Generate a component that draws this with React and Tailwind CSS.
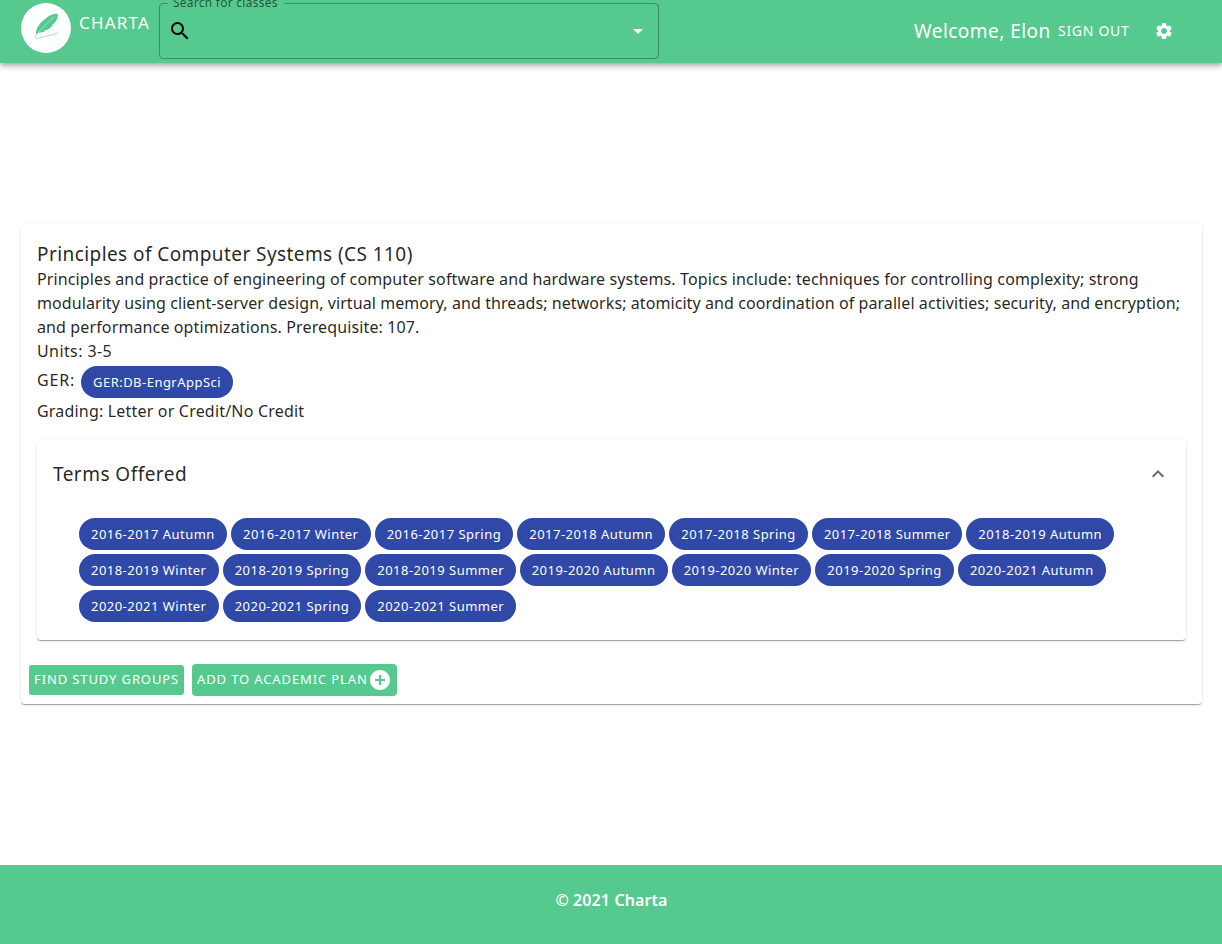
import { MdSearch, MdArrowDropDown, MdSettings, MdAddCircle, MdExpandLess } from "react-icons/md";

const terms = [
  ["2016-2017 Autumn", "2016-2017 Winter", "2016-2017 Spring", "2017-2018 Autumn", "2017-2018 Spring", "2017-2018 Summer", "2018-2019 Autumn"],
  ["2018-2019 Winter", "2018-2019 Spring", "2018-2019 Summer", "2019-2020 Autumn", "2019-2020 Winter", "2019-2020 Spring", "2020-2021 Autumn"],
  ["2020-2021 Winter", "2020-2021 Spring", "2020-2021 Summer"],
];

const termWidths = {
  Autumn: "w-[148px]",
  Winter: "w-[139.7px]",
  Spring: "w-[138.6px]",
  Summer: "w-[150.4px]",
};

const paper = "rounded bg-white shadow-[0_2px_1px_-1px_rgba(0,0,0,0.2),0_1px_1px_0_rgba(0,0,0,0.14),0_1px_3px_0_rgba(0,0,0,0.12)]";

function Chip({ children, className = "" }) {
  return (
    <span className={`inline-flex h-8 shrink-0 items-center whitespace-nowrap rounded-full bg-[#3048a8] pl-3 text-[13px] tracking-[0.47px] text-white ${className}`}>
      {children}
    </span>
  );
}

function Logo() {
  return (
    <svg viewBox="0 0 50 50" className="mt-[3px] size-[50px] shrink-0" aria-hidden="true">
      <circle cx="25" cy="25" r="25" fill="#fff" />
      <path d="M15 32C14.500 26 18 20.500 24 16C28 12.500 32 10.500 36.300 10.800C37.800 13.500 36 17 33.500 20L31 21.500L32 22C30 24.500 28 26 25.500 27L23.500 27L24.500 28C21 29.500 18.500 29.500 17 30Z" fill="#56ca8e" />
      <path d="M15 32.500C20 26 26 20 33.500 14" fill="none" stroke="#b2e8cc" strokeWidth="0.800" />
      <path d="M15.500 31C13 35 14.500 36.500 19 35C25 32.500 31 33 37.500 29.500" fill="none" stroke="#a5e4c3" strokeWidth="1" />
    </svg>
  );
}

export default function App() {
  return (
    <div className="flex h-[944px] w-full flex-col overflow-hidden bg-white font-['Noto_Sans',sans-serif] text-base leading-6 text-black/87">
      <header className="flex h-[63px] shrink-0 items-start bg-[#56ca8e] pl-[21px] text-white shadow-[0_2px_4px_-1px_rgba(0,0,0,0.2),0_4px_5px_0_rgba(0,0,0,0.14),0_1px_10px_0_rgba(0,0,0,0.12)]">
        <Logo />
        <span className="ml-2 mt-[11px] w-20 whitespace-nowrap text-[17px] tracking-[1.2px]">CHARTA</span>
        <div className="relative mt-[3px] flex h-14 w-[500px] items-center justify-between rounded border border-black/30 pl-[8px] pr-[8px]">
          <span className="absolute -top-[9px] left-[8px] whitespace-nowrap bg-[#56ca8e] pl-[5px] pr-[6px] text-xs leading-4 tracking-[0.25px] text-black/60">Search for classes</span>
          <MdSearch className="size-6 text-black" />
          <MdArrowDropDown className="size-6" />
        </div>
        <div className="ml-auto flex h-[62px] items-center pr-12">
          <span className="w-[144px] whitespace-nowrap text-[19px] tracking-[0.46px]">Welcome, Elon</span>
          <span className="w-[96px] whitespace-nowrap text-sm tracking-[0.7px]">SIGN OUT</span>
          <MdSettings className="size-5" />
        </div>
      </header>

      <main className="flex flex-1 items-start px-[21px] pt-[161px] pr-5">
        <section className={`h-[480px] w-full ${paper}`}>
          <div className="px-4 pt-[18px]">
            <h1 className="whitespace-nowrap pb-px text-[19px] leading-6 tracking-[0.42px]">Principles of Computer Systems (CS 110)</h1>
            <p className="whitespace-nowrap">
              <span className="block tracking-[0.122px]">Principles and practice of engineering of computer software and hardware systems. Topics include: techniques for controlling complexity; strong</span>
              <span className="block tracking-[0.078px]">modularity using client-server design, virtual memory, and threads; networks; atomicity and coordination of parallel activities; security, and encryption;</span>
              <span className="block tracking-[0.125px]">and performance optimizations. Prerequisite: 107.</span>
            </p>
            <p className="tracking-[0.4px]">Units: 3-5</p>
            <div className="flex h-9 items-center pt-px">
              <span className="-mt-1 w-11 tracking-[0.8px]">GER:</span>
              <Chip className="w-[152px]">GER:DB-EngrAppSci</Chip>
            </div>
            <p className="tracking-[0.19px]">Grading: Letter or Credit/No Credit</p>

            <section className={`mt-[17px] h-[200px] ${paper}`}>
              <div className="flex h-[68px] items-center justify-between pl-4 pr-4">
                <h2 className="whitespace-nowrap text-[19px] tracking-[0.46px]">Terms Offered</h2>
                <MdExpandLess className="size-6 text-black/60" />
              </div>
              <div className="flex flex-col gap-1 pl-[42px] pt-[10px]">
                {terms.map((row) => (
                  <div key={row[0]} className="flex gap-1">
                    {row.map((term) => (
                      <Chip key={term} className={`pb-px ${termWidths[term.slice(10)]}`}>{term}</Chip>
                    ))}
                  </div>
                ))}
              </div>
            </section>
          </div>
          <div className="mt-6 flex h-8 items-center gap-2 pl-2 text-[13px] text-white">
            <button className="h-[30px] w-[155px] whitespace-nowrap rounded-[3px] bg-[#56ca8e] pb-0.5 pl-[5px] text-left tracking-[0.88px]">FIND STUDY GROUPS</button>
            <button className="flex h-8 w-[205px] items-center justify-between whitespace-nowrap rounded bg-[#56ca8e] pl-[5px] pr-[5px] tracking-[0.88px]">
              <span className="pb-0.5">ADD TO ACADEMIC PLAN</span>
              <MdAddCircle className="size-6 shrink-0" />
            </button>
          </div>
        </section>
      </main>

      <footer className="flex h-[79px] shrink-0 justify-center bg-[#56ca8e] pl-px pt-[23px] font-semibold tracking-[0.1px] text-white">
        © 2021 Charta
      </footer>
    </div>
  );
}
